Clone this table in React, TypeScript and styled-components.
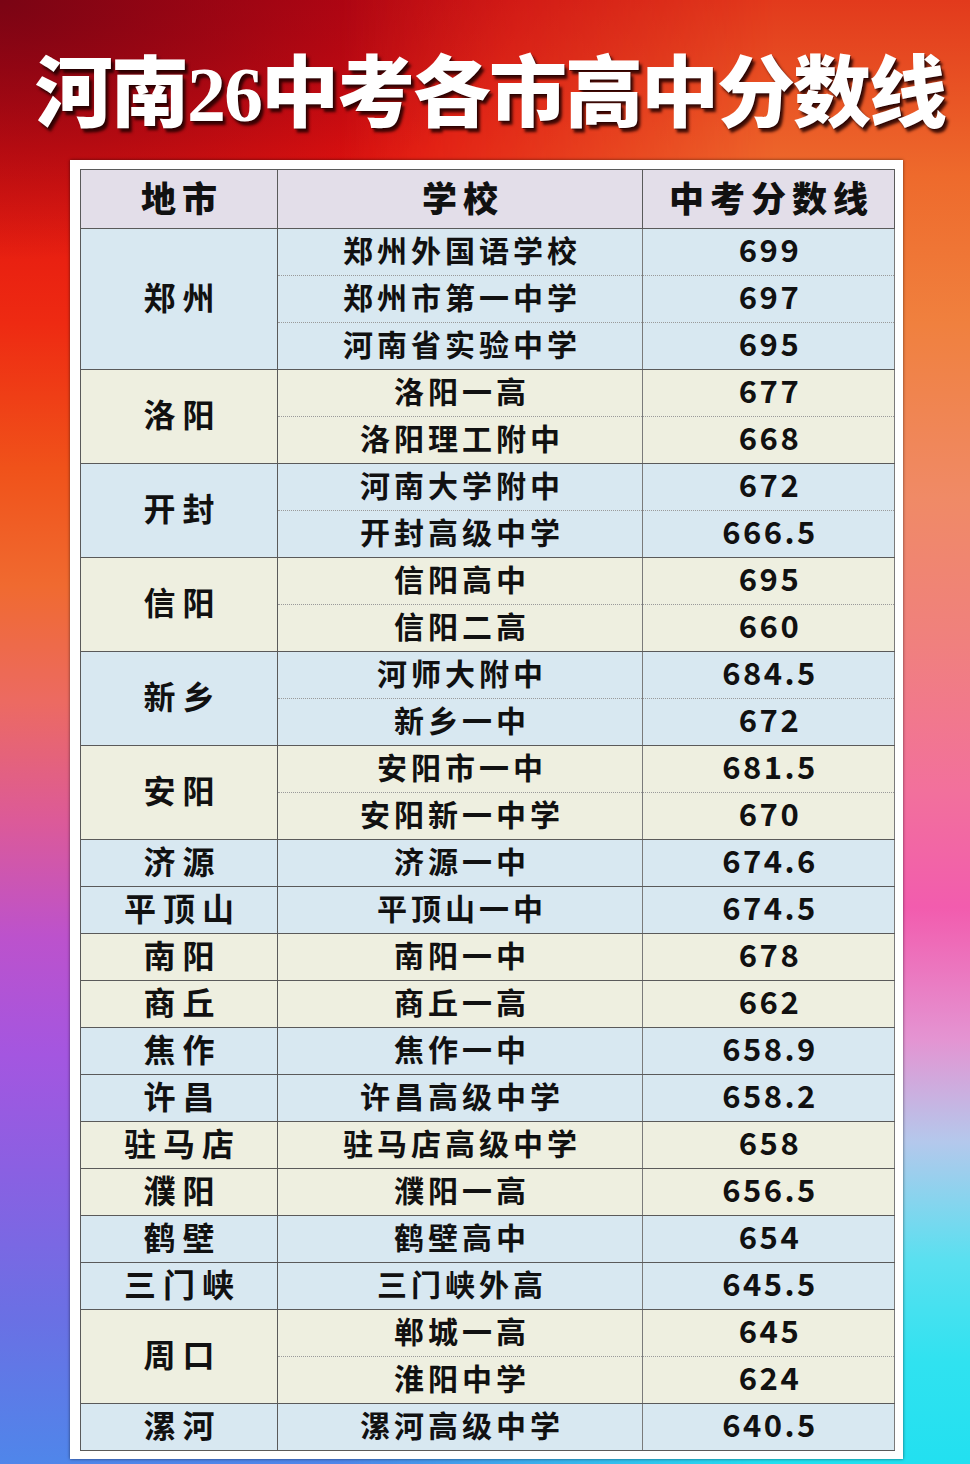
import React from "react";
import styled, { createGlobalStyle } from "styled-components";

const GlobalStyle = createGlobalStyle`
  html, body { margin: 0; padding: 0; }
  body {
    width: 970px;
    font-family: "Noto Sans CJK SC", "Noto Sans", sans-serif;
  }
`;

type Tone = "blue" | "beige";
type Group = { city: string; tone: Tone; rows: [string, string][] };

const groups: Group[] = [
  { city: "郑州", tone: "blue", rows: [["郑州外国语学校", "699"], ["郑州市第一中学", "697"], ["河南省实验中学", "695"]] },
  { city: "洛阳", tone: "beige", rows: [["洛阳一高", "677"], ["洛阳理工附中", "668"]] },
  { city: "开封", tone: "blue", rows: [["河南大学附中", "672"], ["开封高级中学", "666.5"]] },
  { city: "信阳", tone: "beige", rows: [["信阳高中", "695"], ["信阳二高", "660"]] },
  { city: "新乡", tone: "blue", rows: [["河师大附中", "684.5"], ["新乡一中", "672"]] },
  { city: "安阳", tone: "beige", rows: [["安阳市一中", "681.5"], ["安阳新一中学", "670"]] },
  { city: "济源", tone: "blue", rows: [["济源一中", "674.6"]] },
  { city: "平顶山", tone: "blue", rows: [["平顶山一中", "674.5"]] },
  { city: "南阳", tone: "beige", rows: [["南阳一中", "678"]] },
  { city: "商丘", tone: "beige", rows: [["商丘一高", "662"]] },
  { city: "焦作", tone: "blue", rows: [["焦作一中", "658.9"]] },
  { city: "许昌", tone: "blue", rows: [["许昌高级中学", "658.2"]] },
  { city: "驻马店", tone: "beige", rows: [["驻马店高级中学", "658"]] },
  { city: "濮阳", tone: "beige", rows: [["濮阳一高", "656.5"]] },
  { city: "鹤壁", tone: "blue", rows: [["鹤壁高中", "654"]] },
  { city: "三门峡", tone: "blue", rows: [["三门峡外高", "645.5"]] },
  { city: "周口", tone: "beige", rows: [["郸城一高", "645"], ["淮阳中学", "624"]] },
  { city: "漯河", tone: "blue", rows: [["漯河高级中学", "640.5"]] },
];

const toneColor: Record<Tone, string> = {
  blue: "#d8e8f1",
  beige: "#eeefe0",
};

const Page = styled.div`
  position: relative;
  width: 970px;
  min-height: 1464px;
  overflow: hidden;
  box-sizing: border-box;
  background:
    radial-gradient(ellipse 520px 260px at 0% 0%, #7a0414 0%, rgba(122, 4, 20, 0) 100%),
    linear-gradient(180deg,
      #c80612 0%, #e0100f 10%, #ee2a12 22%, #f0521a 32%, #f06a30 40%,
      #ec6a62 48%, #dc5a98 56%, #bc52cc 64%, #a456e0 72%, #8a60e2 80%,
      #6a70e4 90%, #4f86ea 100%);
  &::before {
    content: "";
    position: absolute;
    inset: 0;
    background: linear-gradient(180deg,
      #e23a1c 0%, #ee6a2c 12%, #f0803e 22%, #f08a66 34%, #f0807e 44%,
      #f2709c 54%, #f25cae 62%, #e494d2 71%, #b4c8ec 78%, #5ae0f0 86%,
      #30e2f0 93%, #22e0f0 100%);
    -webkit-mask-image: linear-gradient(90deg, transparent 35%, #000 80%);
    mask-image: linear-gradient(90deg, transparent 35%, #000 80%);
    pointer-events: none;
  }
`;

const Content = styled.div`
  position: relative;
  display: flex;
  flex-direction: column;
`;

const TitleBar = styled.div`
  height: 160px;
  display: flex;
  align-items: center;
  justify-content: center;
  padding-left: 10px;
  box-sizing: border-box;
  padding-top: 30px;
`;

const Title = styled.h1`
  margin: 0;
  font-family: "Liberation Serif", "Noto Sans CJK SC", serif;
  font-weight: 900;
  font-size: 78px;
  line-height: 1;
  letter-spacing: -2px;
  color: #ffffff;
  white-space: nowrap;
  text-shadow: 3px 4px 3px rgba(30, 0, 0, 0.85), 1px 1px 0 rgba(60, 0, 0, 0.6);
`;

const Card = styled.div`
  margin: 0 67px 0 70px;
  background: #ffffff;
  padding: 9px 9px 8px 10px;
  box-shadow: 0 0 3px rgba(0, 0, 0, 0.55);
`;

const Table = styled.table`
  width: 814px;
  border-collapse: collapse;
  table-layout: fixed;
  color: #111;
  border: 1.5px solid #5a5a5a;
`;

const HeadCell = styled.th`
  height: 52px;
  padding: 0 0 6px 6px;
  background: #e3dee9;
  border: 1.5px solid #5a5a5a;
  font-size: 35px;
  font-weight: 900;
  letter-spacing: 6px;
  line-height: 1;
  text-align: center;
  vertical-align: middle;
`;

const CityCell = styled.td<{ $tone: Tone }>`
  padding: 0 0 7px 7px;
  background: ${(p) => toneColor[p.$tone]};
  border: 1.5px solid #5a5a5a;
  font-size: 32px;
  font-weight: 700;
  letter-spacing: 7px;
  line-height: 1;
  text-align: center;
  vertical-align: middle;
  white-space: nowrap;
`;

const DataCell = styled.td<{ $tone: Tone; $first: boolean; $last: boolean; $num?: boolean }>`
  height: 39px;
  padding: 0 0 7px ${(p) => (p.$num ? 3 : 4)}px;
  background: ${(p) => toneColor[p.$tone]};
  border-top: ${(p) => (p.$first ? "1.5px solid #5a5a5a" : "1px dotted #9a9a9a")};
  border-bottom: ${(p) => (p.$last ? "1.5px solid #5a5a5a" : "1px dotted #9a9a9a")};
  border-left: 1px solid #7a7a7a;
  border-right: 1px solid #7a7a7a;
  font-size: ${(p) => (p.$num ? 31 : 30)}px;
  font-weight: 700;
  letter-spacing: ${(p) => (p.$num ? 2.5 : 4)}px;
  line-height: 1;
  text-align: center;
  vertical-align: middle;
  white-space: nowrap;
`;

const CityCol = styled.col`
  width: 197px;
`;
const SchoolCol = styled.col`
  width: 365px;
`;
const ScoreCol = styled.col`
  width: 252px;
`;

export default function App() {
  return (
    <>
      <GlobalStyle />
      <Page>
        <Content>
          <TitleBar>
            <Title>河南26中考各市高中分数线</Title>
          </TitleBar>
          <Card>
            <Table>
              <colgroup>
                <CityCol />
                <SchoolCol />
                <ScoreCol />
              </colgroup>
              <thead>
                <tr>
                  <HeadCell>地市</HeadCell>
                  <HeadCell>学校</HeadCell>
                  <HeadCell>中考分数线</HeadCell>
                </tr>
              </thead>
              <tbody>
                {groups.map((g) =>
                  g.rows.map(([school, score], i) => {
                    const first = i === 0;
                    const last = i === g.rows.length - 1;
                    return (
                      <tr key={g.city + school}>
                        {first && (
                          <CityCell $tone={g.tone} rowSpan={g.rows.length}>
                            {g.city}
                          </CityCell>
                        )}
                        <DataCell $tone={g.tone} $first={first} $last={last}>
                          {school}
                        </DataCell>
                        <DataCell $tone={g.tone} $first={first} $last={last} $num>
                          {score}
                        </DataCell>
                      </tr>
                    );
                  })
                )}
              </tbody>
            </Table>
          </Card>
        </Content>
      </Page>
    </>
  );
}
